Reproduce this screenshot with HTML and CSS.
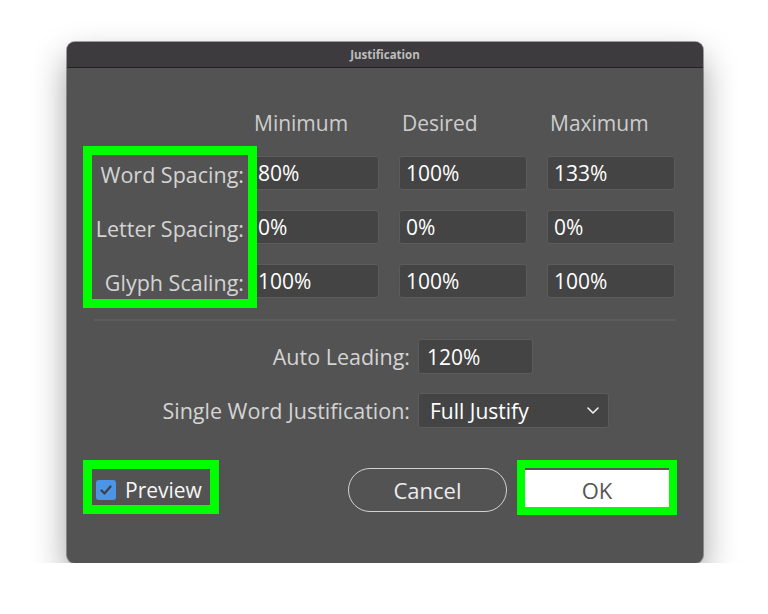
FILE: index.html
```html
<!DOCTYPE html>
<html>
<head>
<meta charset="utf-8">
<link rel="stylesheet" href="styles.css">
</head>
<body>
<div class="window">
  <div class="titlebar">Justification</div>
  <div class="content">
    <div class="grid-row head-row">
      <div class="label"></div>
      <div class="cols">
        <div class="head">Minimum</div>
        <div class="head">Desired</div>
        <div class="head">Maximum</div>
      </div>
    </div>
    <div class="grid-row">
      <div class="label">Word Spacing:</div>
      <div class="cols">
        <div class="field">80%</div>
        <div class="field">100%</div>
        <div class="field">133%</div>
      </div>
    </div>
    <div class="grid-row">
      <div class="label">Letter Spacing:</div>
      <div class="cols">
        <div class="field">0%</div>
        <div class="field">0%</div>
        <div class="field">0%</div>
      </div>
    </div>
    <div class="grid-row last">
      <div class="label">Glyph Scaling:</div>
      <div class="cols">
        <div class="field">100%</div>
        <div class="field">100%</div>
        <div class="field">100%</div>
      </div>
    </div>
    <div class="separator"></div>
    <div class="opt-row first">
      <div class="opt-label">Auto Leading:</div>
      <div class="field small">120%</div>
    </div>
    <div class="opt-row">
      <div class="opt-label">Single Word Justification:</div>
      <div class="field select">
        <span>Full Justify</span>
        <svg class="chev" width="12" height="7" viewBox="0 0 12 7"><polyline points="1,1 6,6 11,1" fill="none" stroke="#f0f0f0" stroke-width="1.6" stroke-linecap="round" stroke-linejoin="round"/></svg>
      </div>
    </div>
    <div class="bottom-row">
      <div class="preview">
        <span class="checkbox">
          <svg width="20" height="20" viewBox="0 0 20 20"><polyline points="5.5,10.5 8.5,13.5 14.5,6.5" fill="none" stroke="#3f3f3f" stroke-width="2.2" stroke-linecap="round" stroke-linejoin="round"/></svg>
        </span>
        <span class="preview-text">Preview</span>
      </div>
      <div class="buttons">
        <div class="btn cancel">Cancel</div>
        <div class="btn ok">OK</div>
      </div>
    </div>
  </div>
  <div class="mark mark-labels"></div>
  <div class="mark mark-preview"></div>
  <div class="mark mark-ok"></div>
</div>
</body>
</html>
```
FILE: styles.css
```css
html, body {
  margin: 0;
  background: #ffffff;
}
body {
  padding: 42px 0 0 67px;
  font-family: "Open Sans", "Noto Sans", sans-serif;
}
.window {
  position: relative;
  width: 636px;
  height: 521px;
  box-sizing: border-box;
  background: #535353;
  border-radius: 8px;
  box-shadow: 0 16px 34px rgba(0,0,0,0.38), 0 0 0 1px rgba(0,0,0,0.35);
  overflow: hidden;
}
.titlebar {
  height: 25px;
  background: #3d3b3e;
  border-bottom: 1px solid #222222;
  display: flex;
  align-items: center;
  justify-content: center;
  color: #bdbdbd;
  font-size: 11.5px;
  font-weight: 700;
}
.content {
  padding: 43px 28px 0 24px;
}
.grid-row {
  display: flex;
  align-items: center;
  height: 34px;
  margin-bottom: 20px;
}
.grid-row.head-row {
  height: 24px;
  margin-bottom: 21px;
}
.grid-row.last {
  margin-bottom: 0;
}
.label {
  width: 153px;
  padding-right: 7px;
  padding-top: 3px;
  text-align: right;
  color: #d4d4d4;
  font-size: 21.5px;
  line-height: 24px;
  white-space: nowrap;
}
.head-row .label {
  padding-top: 0;
}
.cols {
  display: flex;
  gap: 20px;
}
.head {
  width: 128px;
  box-sizing: border-box;
  padding-left: 3px;
  color: #cdcdcd;
  font-size: 21px;
  line-height: 24px;
}
.field {
  width: 128px;
  height: 34px;
  box-sizing: border-box;
  background: #444444;
  border: 1px solid #5c5c5c;
  border-radius: 3px;
  padding-left: 6px;
  display: flex;
  align-items: center;
  color: #ffffff;
  font-size: 21px;
  line-height: 24px;
}
.separator {
  margin: 21px 0 0 3px;
  width: 582px;
  height: 2px;
  background: #5d5d5d;
}
.opt-row {
  display: flex;
  align-items: center;
  height: 35px;
  margin-top: 19px;
}
.opt-row.first {
  margin-top: 18px;
}
.opt-label {
  width: 319px;
  margin-right: 8px;
  text-align: right;
  color: #d4d4d4;
  font-size: 21.5px;
  line-height: 24px;
  white-space: nowrap;
}
.field.small {
  width: 115px;
  height: 35px;
  padding-left: 8px;
}
.field.select {
  width: 191px;
  height: 35px;
  padding-left: 11px;
  padding-right: 9px;
  justify-content: space-between;
}
.chev {
  display: block;
}
.bottom-row {
  display: flex;
  align-items: center;
  justify-content: space-between;
  height: 44px;
  margin-top: 40px;
  padding-left: 5px;
  padding-right: 3px;
}
.preview {
  display: flex;
  align-items: center;
  gap: 9px;
}
.checkbox {
  width: 20px;
  height: 20px;
  background: #4b94e6;
  border-radius: 3px;
  display: block;
}
.checkbox svg {
  display: block;
}
.preview-text {
  color: #f6f6f6;
  font-size: 21px;
  line-height: 24px;
  font-weight: 500;
}
.buttons {
  display: flex;
  align-items: center;
  gap: 15px;
}
.btn {
  display: flex;
  align-items: center;
  justify-content: center;
  font-size: 22px;
  line-height: 24px;
  box-sizing: border-box;
}
.cancel {
  width: 159px;
  height: 44px;
  border: 1.5px solid #d2d2d2;
  border-radius: 22px;
  color: #ececec;
}
.ok {
  width: 150px;
  height: 41px;
  background: #ffffff;
  border-radius: 4px;
  color: #555555;
}
.mark {
  position: absolute;
  box-sizing: border-box;
  border: 9px solid #00ff00;
}
.mark-labels {
  left: 16px;
  top: 104px;
  width: 174px;
  height: 162px;
}
.mark-preview {
  left: 16px;
  top: 418px;
  width: 136px;
  height: 54px;
}
.mark-ok {
  left: 450px;
  top: 418px;
  width: 160px;
  height: 55px;
  border-width: 8px;
}
```
